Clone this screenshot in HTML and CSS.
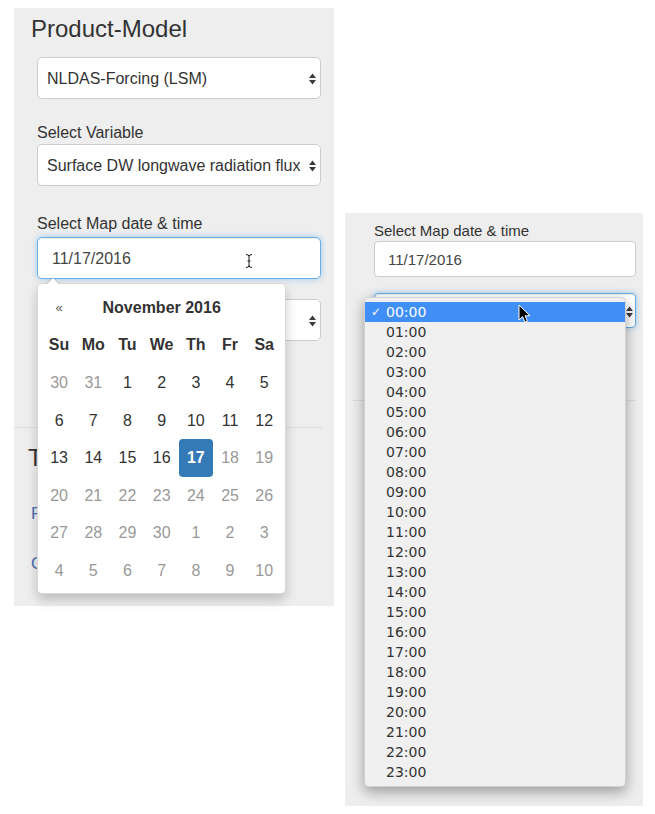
FILE: index.html
```html
<!DOCTYPE html>
<html lang="en">
<head>
<meta charset="utf-8">
<title>Product-Model</title>
<link rel="stylesheet" href="styles.css">
</head>
<body>
<div class="page">
  <section class="panel panel-left">
    <h3 class="heading">Product-Model</h3>
    <div class="control select product-select">
      <span class="control-text">NLDAS-Forcing (LSM)</span>
      <svg class="updown" viewBox="0 0 7 12" width="7" height="12"><path d="M0 5 L3.5 0.5 L7 5 Z M0 7 L7 7 L3.5 11.5 Z"/></svg>
    </div>
    <label class="label label-variable">Select Variable</label>
    <div class="control select variable-select">
      <span class="control-text">Surface DW longwave radiation flux</span>
      <svg class="updown" viewBox="0 0 7 12" width="7" height="12"><path d="M0 5 L3.5 0.5 L7 5 Z M0 7 L7 7 L3.5 11.5 Z"/></svg>
    </div>
    <label class="label label-date">Select Map date &amp; time</label>
    <div class="control input focused date-input">
      <span class="control-text">11/17/2016</span>
      <svg class="ibeam" viewBox="0 0 8 14" width="8" height="14"><path d="M1 0.5 Q4 0.5 4 2.5 Q4 0.5 7 0.5 M4 2.5 L4 11.5 M1 13.5 Q4 13.5 4 11.5 Q4 13.5 7 13.5 M2.5 7 L5.5 7"/></svg>
    </div>
    <div class="control select hour-select">
      <span class="spacer"></span>
      <svg class="updown" viewBox="0 0 7 12" width="7" height="12"><path d="M0 5 L3.5 0.5 L7 5 Z M0 7 L7 7 L3.5 11.5 Z"/></svg>
    </div>
    <hr class="rule rule-left">
    <div class="covered">
      <h3 class="heading heading-tools">T</h3>
      <a class="link link-first">F</a>
      <a class="link link-second">C</a>
    </div>

    <div class="datepicker">
      <div class="dp-grid">
        <div class="dp-prev">«</div>
        <div class="dp-switch">November 2016</div>
        <div class="dp-next"></div>
        <div class="dow">Su</div><div class="dow">Mo</div><div class="dow">Tu</div><div class="dow">We</div><div class="dow">Th</div><div class="dow">Fr</div><div class="dow">Sa</div>
        <div class="day muted">30</div><div class="day muted">31</div><div class="day">1</div><div class="day">2</div><div class="day">3</div><div class="day">4</div><div class="day">5</div>
        <div class="day">6</div><div class="day">7</div><div class="day">8</div><div class="day">9</div><div class="day">10</div><div class="day">11</div><div class="day">12</div>
        <div class="day">13</div><div class="day">14</div><div class="day">15</div><div class="day">16</div><div class="day active">17</div><div class="day muted">18</div><div class="day muted">19</div>
        <div class="day muted">20</div><div class="day muted">21</div><div class="day muted">22</div><div class="day muted">23</div><div class="day muted">24</div><div class="day muted">25</div><div class="day muted">26</div>
        <div class="day muted">27</div><div class="day muted">28</div><div class="day muted">29</div><div class="day muted">30</div><div class="day muted">1</div><div class="day muted">2</div><div class="day muted">3</div>
        <div class="day muted">4</div><div class="day muted">5</div><div class="day muted">6</div><div class="day muted">7</div><div class="day muted">8</div><div class="day muted">9</div><div class="day muted">10</div>
      </div>
    </div>
  </section>

  <section class="panel panel-right">
    <label class="label label-small">Select Map date &amp; time</label>
    <div class="control input input-small">
      <span class="control-text">11/17/2016</span>
    </div>
    <div class="control select select-small focused">
      <span class="spacer"></span>
      <svg class="updown" viewBox="0 0 7 12" width="7" height="12"><path d="M0 5 L3.5 0.5 L7 5 Z M0 7 L7 7 L3.5 11.5 Z"/></svg>
    </div>
    <hr class="rule rule-right">
    <ul class="menu">
      <li class="menu-item selected"><span class="check">✓</span>00:00</li>
      <li class="menu-item">01:00</li>
      <li class="menu-item">02:00</li>
      <li class="menu-item">03:00</li>
      <li class="menu-item">04:00</li>
      <li class="menu-item">05:00</li>
      <li class="menu-item">06:00</li>
      <li class="menu-item">07:00</li>
      <li class="menu-item">08:00</li>
      <li class="menu-item">09:00</li>
      <li class="menu-item">10:00</li>
      <li class="menu-item">11:00</li>
      <li class="menu-item">12:00</li>
      <li class="menu-item">13:00</li>
      <li class="menu-item">14:00</li>
      <li class="menu-item">15:00</li>
      <li class="menu-item">16:00</li>
      <li class="menu-item">17:00</li>
      <li class="menu-item">18:00</li>
      <li class="menu-item">19:00</li>
      <li class="menu-item">20:00</li>
      <li class="menu-item">21:00</li>
      <li class="menu-item">22:00</li>
      <li class="menu-item">23:00</li>
    </ul>
    <svg class="pointer" viewBox="0 0 13 20" width="13" height="20"><path d="M1 1 L1 16 L4.6 12.6 L7 18.2 L9.4 17.2 L7.1 11.8 L12 11.8 Z"/></svg>
  </section>
</div>
</body>
</html>
```

FILE: styles.css
```css
* { box-sizing: border-box; }

html, body {
  margin: 0;
  padding: 0;
  background: #ffffff;
}

body {
  width: 655px;
  height: 814px;
  overflow: hidden;
  font-family: "Liberation Sans", Arial, Helvetica, sans-serif;
  color: #333333;
}

.page {
  display: flex;
  align-items: flex-start;
  gap: 11px;
  padding: 8px 0 0 14px;
}

.panel {
  position: relative;
  background: #eeeeee;
  display: flex;
  flex-direction: column;
}

.panel-left {
  width: 320px;
  height: 598px;
  padding: 7px 13px 0 17px;
}

.panel-right {
  width: 298px;
  height: 593px;
  margin-top: 205px;
  padding: 8px 7px 0 29px;
}

.heading {
  margin: 0;
  font-size: 24px;
  line-height: 28px;
  font-weight: normal;
  color: #333333;
}

.label {
  display: block;
  font-size: 16px;
  line-height: 20px;
  color: #333333;
  margin-left: 6px;
}

.control {
  position: relative;
  display: flex;
  align-items: center;
  background: #ffffff;
  border: 1px solid #cccccc;
  border-radius: 5px;
  margin-left: 6px;
  width: 284px;
  height: 42px;
  font-size: 16px;
  color: #333333;
}

.control-text {
  white-space: nowrap;
  overflow: hidden;
}

.select {
  padding: 2px 0 0 9px;
}

.select .control-text,
.spacer {
  flex: 1;
}

.updown {
  flex: none;
  margin: 0 4px 0 3px;
  fill: #3a3a3a;
}

.input {
  padding: 1px 0 0 14px;
  color: #444444;
}

.focused {
  border-color: #66afe9;
  box-shadow: inset 0 1px 1px rgba(0, 0, 0, 0.075), 0 0 6px rgba(102, 175, 233, 0.6);
}

.product-select { margin-top: 14px; }
.label-variable { margin-top: 24px; }
.variable-select { margin-top: 1px; }
.label-date { margin-top: 28px; }
.date-input { margin-top: 3px; }
.hour-select { margin-top: 20px; }

.ibeam {
  position: absolute;
  left: 207px;
  top: 16px;
  fill: none;
  stroke: #1a1a1a;
  stroke-width: 1;
}

.rule {
  border: 0;
  border-top: 1px solid #dcdcdc;
  height: 0;
  margin: 0;
}

.rule-left {
  margin: 86px 0 0 -17px;
  width: 308px;
}

.covered {
  margin-left: -3px;
  white-space: nowrap;
}

.heading-tools { margin-top: 16px; }

.link {
  display: block;
  font-size: 17px;
  line-height: 22px;
  color: #4a6aae;
  padding-left: 3px;
}

.link-first { margin-top: 31px; }
.link-second { margin-top: 28px; }

/* Datepicker */
.datepicker {
  position: absolute;
  left: 23px;
  top: 275px;
  width: 249.4px;
  padding: 5px 4px 3px;
  background: #ffffff;
  border: 1px solid rgba(0, 0, 0, 0.15);
  border-radius: 5px;
  box-shadow: 0 6px 12px rgba(0, 0, 0, 0.2);
}

.datepicker::before,
.datepicker::after {
  content: "";
  position: absolute;
  width: 0;
  height: 0;
  border-left: 7px solid transparent;
  border-right: 7px solid transparent;
}

.datepicker::before {
  left: 8px;
  top: -7px;
  border-bottom: 7px solid rgba(0, 0, 0, 0.18);
}

.datepicker::after {
  left: 9px;
  top: -6px;
  border-left-width: 6px;
  border-right-width: 6px;
  border-bottom: 6px solid #ffffff;
}

.dp-grid {
  display: grid;
  grid-template-columns: repeat(7, 34.2px);
  grid-auto-rows: 37.6px;
  font-size: 16px;
}

.dp-grid > div {
  display: flex;
  align-items: center;
  justify-content: center;
}

.dp-prev {
  font-size: 13px;
  color: #555555;
}

.dp-switch {
  grid-column: span 5;
  font-weight: bold;
  color: #333333;
}

.dow {
  font-weight: bold;
  color: #333333;
}

.day { color: #333333; }
.day.muted { color: #999999; }

.day.active {
  background: #337ab7;
  color: #ffffff;
  font-weight: bold;
  border-radius: 4px;
}

/* Right panel */
.label-small {
  font-size: 15px;
  line-height: 19px;
  margin-left: 0;
}

.input-small {
  margin: 1px 0 0 0;
  width: 262px;
  height: 36px;
  font-size: 15px;
  padding-left: 13px;
  border-radius: 4px;
}

.select-small {
  margin: 16px 0 0 0;
  width: 262px;
  height: 35px;
  font-size: 15px;
  border-radius: 4px;
}

.select-small .updown {
  margin-right: 2px;
}

.rule-right {
  margin: 72px 0 0 -21px;
  width: 283px;
}

.menu {
  position: absolute;
  left: 19px;
  top: 84px;
  width: 262px;
  margin: 0;
  padding: 4px 0;
  list-style: none;
  background: #f0f0f0;
  border: 1px solid rgba(0, 0, 0, 0.12);
  border-radius: 5px;
  box-shadow: 0 5px 14px rgba(0, 0, 0, 0.35);
  font-family: "DejaVu Sans", "Liberation Sans", sans-serif;
  font-size: 14px;
  color: #333333;
}

.menu-item {
  position: relative;
  height: 20px;
  line-height: 20px;
  padding-left: 21px;
}

.menu-item.selected {
  background: #3f8ff6;
  color: #ffffff;
}

.check {
  position: absolute;
  left: 6px;
  top: 0;
  font-size: 12px;
  line-height: 21px;
}

.pointer {
  position: absolute;
  left: 173px;
  top: 91px;
  fill: #000000;
  stroke: #ffffff;
  stroke-width: 1;
}
```
